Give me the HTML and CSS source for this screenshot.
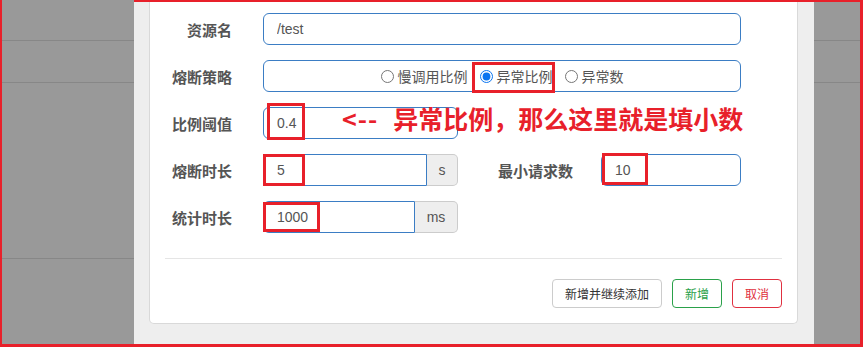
FILE: index.html
```html
<!DOCTYPE html>
<html lang="zh">
<head>
    <meta charset="UTF-8">
    <title>新增熔断规则</title>
    <link rel="stylesheet" href="styles.css">
</head>
<body>
    <div class="frame">
        <div class="side side-left">
            <div class="line-row r1"></div>
            <div class="line-row r2"></div>
            <div class="line-row r3"></div>
        </div>
        <div class="modal-area">
            <div class="panel">
                <div class="form">
                    <div class="form-row">
                        <label class="label">资源名</label>
                        <div class="control">
                            <input class="field" type="text" value="/test">
                        </div>
                    </div>
                    <div class="form-row">
                        <label class="label">熔断策略</label>
                        <div class="control radio-box">
                            <label class="radio"><input type="radio" name="grade">慢调用比例</label>
                            <label class="radio marked"><input type="radio" name="grade" checked>异常比例<span class="mark mark-radio"></span></label>
                            <label class="radio"><input type="radio" name="grade">异常数</label>
                        </div>
                    </div>
                    <div class="form-row">
                        <label class="label">比例阈值</label>
                        <div class="control">
                            <div class="wrap">
                                <input class="field short" type="text" value="0.4">
                                <span class="mark mark-ratio"></span>
                                <span class="note"><span class="arrow">&lt;--</span>异常比例，那么这里就是填小数</span>
                            </div>
                        </div>
                    </div>
                    <div class="form-row">
                        <label class="label">熔断时长</label>
                        <div class="control">
                            <div class="group wrap">
                                <input class="field in-group w-s" type="text" value="5">
                                <span class="addon w-s-addon">s</span>
                                <span class="mark mark-time"></span>
                            </div>
                            <label class="sub-label">最小请求数</label>
                            <div class="wrap">
                                <input class="field min-req" type="text" value="10">
                                <span class="mark mark-min"></span>
                            </div>
                        </div>
                    </div>
                    <div class="form-row">
                        <label class="label">统计时长</label>
                        <div class="control">
                            <div class="group wrap">
                                <input class="field in-group w-ms" type="text" value="1000">
                                <span class="addon w-ms-addon">ms</span>
                                <span class="mark mark-stat"></span>
                            </div>
                        </div>
                    </div>
                </div>
                <div class="footer">
                    <button class="btn">新增并继续添加</button>
                    <button class="btn btn-add">新增</button>
                    <button class="btn btn-cancel">取消</button>
                </div>
            </div>
        </div>
        <div class="side side-right">
            <div class="line-row r1"></div>
            <div class="line-row r2"></div>
        </div>
    </div>
</body>
</html>
```

FILE: styles.css
```css
body {
    margin: 0;
    padding: 0;
    font-family: "Liberation Sans", "Noto Sans CJK SC", sans-serif;
    background: #fff;
}
.frame {
    width: 863px;
    height: 347px;
    box-sizing: border-box;
    display: flex;
    border-left: 2px solid #e8202a;
    border-right: 3px solid #e8202a;
    border-bottom: 3px solid #e8202a;
    background: #999;
}
.side {
    background: #999;
}
.side-left {
    width: 132px;
}
.side-right {
    flex: 1;
    border-top: 2px solid #e8202a;
}
.line-row {
    border-bottom: 1px solid #878787;
}
.side-left .r1 { height: 40px; }
.side-left .r2 { height: 41px; }
.side-left .r3 { height: 175px; }
.side-right .r1 { height: 38px; }
.side-right .r2 { height: 41px; }
.modal-area {
    width: 680px;
    background: #eeeeee;
    border-top: 2px solid #e8202a;
    padding-left: 15px;
    box-sizing: border-box;
}
.panel {
    width: 649px;
    height: 322px;
    box-sizing: border-box;
    background: #fff;
    border: 1px solid #d9d9d9;
    border-top: none;
    border-radius: 0 0 5px 5px;
    padding: 11px 15px 0;
}
.form {
    display: flex;
    flex-direction: column;
    gap: 15px;
}
.form-row {
    display: flex;
    align-items: center;
    height: 32px;
}
.label {
    width: 67px;
    margin-right: 31px;
    text-align: right;
    font-size: 15px;
    font-weight: bold;
    color: #555;
    white-space: nowrap;
}
.control {
    width: 478px;
    height: 32px;
    display: flex;
    align-items: center;
}
.field {
    box-sizing: border-box;
    height: 32px;
    width: 100%;
    border: 1px solid #3b7dc4;
    border-radius: 6px;
    padding: 0 13px;
    font-family: "Liberation Sans", "Noto Sans CJK SC", sans-serif;
    font-size: 14px;
    color: #555;
    outline: none;
    background: #fff;
}
.short {
    width: 195px;
}
.radio-box {
    box-sizing: border-box;
    border: 1px solid #3b7dc4;
    border-radius: 6px;
    justify-content: center;
    align-items: stretch;
}
.radio {
    position: relative;
    display: inline-flex;
    align-items: center;
    font-size: 14px;
    color: #555;
}
.radio + .radio {
    margin-left: 12px;
}
.radio input {
    width: 13px;
    height: 13px;
    margin: 0 4px 0 0;
    accent-color: #0b75f0;
}
.wrap {
    position: relative;
    display: flex;
    height: 32px;
}
.group .in-group {
    border-radius: 6px 0 0 6px;
}
.w-s { width: 164px; }
.w-ms { width: 152px; }
.addon {
    box-sizing: border-box;
    height: 32px;
    display: flex;
    align-items: center;
    justify-content: center;
    background: #eee;
    border: 1px solid #ccc;
    border-left: none;
    border-radius: 0 5px 5px 0;
    font-size: 14px;
    color: #555;
}
.w-s-addon { width: 31px; }
.w-ms-addon { width: 43px; }
.sub-label {
    width: 115px;
    margin-right: 28px;
    text-align: right;
    font-size: 15px;
    font-weight: bold;
    color: #555;
}
.min-req {
    width: 140px;
}
.mark {
    position: absolute;
    box-sizing: border-box;
    border: 3px solid #e8202a;
}
.mark-radio { left: -8px; right: -2px; top: 1px; bottom: -2px; }
.mark-ratio { left: 4px; top: -4px; width: 38px; height: 37px; }
.mark-time { left: 0; top: 0; width: 42px; height: 32px; }
.mark-stat { left: 0; top: 1px; width: 57px; height: 30px; }
.mark-min { left: 1px; top: -1px; width: 46px; height: 32px; }
.note {
    position: absolute;
    left: 79px;
    top: -5px;
    line-height: 32px;
    white-space: nowrap;
    font-family: "Noto Sans CJK SC", sans-serif;
    font-size: 25px;
    font-weight: bold;
    color: #e8202a;
}
.arrow {
    letter-spacing: 1px;
    margin-right: 15px;
}
.footer {
    margin-top: 25px;
    border-top: 1px solid #e5e5e5;
    padding-top: 20px;
    display: flex;
    justify-content: flex-end;
    gap: 10px;
}
.btn {
    height: 29px;
    padding: 0 12px;
    background: #fff;
    border: 1px solid #ccc;
    border-radius: 4px;
    font-family: "Liberation Sans", "Noto Sans CJK SC", sans-serif;
    font-size: 12px;
    color: #333;
}
.btn-add {
    border-color: #2aa14a;
    color: #2aa14a;
}
.btn-cancel {
    border-color: #e03040;
    color: #e03040;
}
```
